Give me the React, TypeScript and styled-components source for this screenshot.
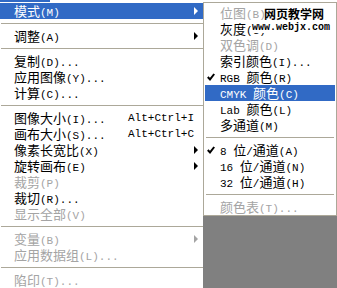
import React from "react";
import styled, { createGlobalStyle } from "styled-components";

const GlobalStyle = createGlobalStyle`
    html, body {
        margin: 0;
        padding: 0;
        background: #808080;
        width: 337px;
        height: 288px;
        overflow: hidden;
    }
    #root {
        width: 337px;
        height: 288px;
        overflow: hidden;
    }
`;

const Page = styled.div`
    display: flex;
    flex-direction: column;
    width: 337px;
    height: 288px;
    font-size: 13px;
    line-height: 16px;
    color: #000;
`;
const MenuBarEdge = styled.div`
    display: flex;
    height: 2px;
    background: #ffffff;
`;
const MenuBarActive = styled.div`
    width: 50px;
    background: #316ac5;
`;
const Body = styled.div`
    display: flex;
    flex: 1;
    min-height: 0;
`;
const MainMenu = styled.div`
    width: 206px;
    flex-shrink: 0;
    background: #ffffff;
    border-right: 1px solid #aca899;
    padding-top: 1px;
    display: flex;
    flex-direction: column;
`;
const SideColumn = styled.div`
    flex: 1;
    margin-left: -4px;
    display: flex;
    flex-direction: column;
    align-items: stretch;
    position: relative;
`;
const SubMenu = styled.div`
    background: #ffffff;
    border: 1px solid #aca899;
    padding: 2px 1px 0 1px;
    height: 214px;
    box-sizing: border-box;
    display: flex;
    flex-direction: column;
`;
const MainItem = styled.div<{ $active?: boolean; $disabled?: boolean }>`
    display: grid;
    grid-template-columns: 114px 1fr 12px;
    align-items: center;
    height: 16px;
    padding: 0 6px 0 14px;
    white-space: nowrap;
    background: ${(p) => (p.$active ? "#316ac5" : "transparent")};
    color: ${(p) => (p.$active ? "#ffffff" : p.$disabled ? "#a4a4a4" : "#000000")};
`;
const SubItem = styled.div<{ $active?: boolean; $disabled?: boolean }>`
    display: grid;
    grid-template-columns: 13px 1fr;
    align-items: center;
    height: 16px;
    padding-left: 2px;
    white-space: nowrap;
    background: ${(p) => (p.$active ? "#316ac5" : "transparent")};
    color: ${(p) => (p.$active ? "#ffffff" : p.$disabled ? "#a4a4a4" : "#000000")};
`;
const Separator = styled.div<{ $h: number }>`
    height: ${(p) => p.$h}px;
    display: flex;
    align-items: center;
    padding: 0 1px;
    &::after {
        content: "";
        flex: 1;
        height: 1px;
        background: #aca899;
    }
`;
const LabelRow = styled.span`
    display: flex;
    align-items: baseline;
    height: 16px;
`;
const Cjk = styled.span`
    display: inline-block;
    height: 16px;
    font-family: "Noto Sans CJK SC", sans-serif;
    font-size: 13px;
    line-height: 16px;
`;
const Lat = styled.span`
    display: inline-block;
    height: 16px;
    white-space: pre;
    font-family: "Liberation Mono", monospace;
    font-size: 11px;
    line-height: 16px;
`;
const Shortcut = styled.span`
    font-family: "Liberation Mono", monospace;
    font-size: 11px;
    line-height: 16px;
`;
const ArrowCell = styled.span`
    display: flex;
    justify-content: flex-start;
    padding-left: 6px;
`;
const Arrow = styled.span`
    width: 0;
    height: 0;
    border-top: 4px solid transparent;
    border-bottom: 4px solid transparent;
    border-left: 4px solid currentColor;
`;
const CanvasArea = styled.div`
    flex: 1;
    background: #808080;
`;
const Watermark = styled.div`
    position: absolute;
    left: 49px;
    top: 4px;
    display: flex;
    flex-direction: column;
    align-items: flex-start;
`;
const WatermarkTitle = styled.div`
    margin-left: 12px;
    font-family: "Noto Sans CJK SC", sans-serif;
    font-size: 12px;
    font-weight: 700;
    line-height: 16px;
    color: #000;
`;
const WatermarkUrl = styled.div`
    background: #ffffff;
    font-family: "Liberation Mono", monospace;
    font-size: 10px;
    font-weight: 700;
    line-height: 11px;
    padding-right: 2px;
    color: #000;
`;

function Label({ text }: { text: string }) {
    const parts = text.match(/[\u3000-\u9fff\uff00-\uffef]+|[^\u3000-\u9fff\uff00-\uffef]+/g) || [];
    return (
        <LabelRow>
            {parts.map((part, i) =>
                /[\u3000-\u9fff\uff00-\uffef]/.test(part) ? (
                    <Cjk key={i}>{part}</Cjk>
                ) : (
                    <Lat key={i}>{part}</Lat>
                )
            )}
        </LabelRow>
    );
}

function Check() {
    return (
        <svg width="8" height="8" viewBox="0 0 8 8">
            <path d="M0.8 4 L3 6.4 L7.2 1" fill="none" stroke="currentColor" strokeWidth="2" />
        </svg>
    );
}

type MainEntry =
    | { sep: true }
    | { sep?: false; text: string; shortcut?: string; sub?: boolean; active?: boolean; disabled?: boolean };

const mainItems: MainEntry[] = [
    { text: "模式(M)", sub: true, active: true },
    { sep: true },
    { text: "调整(A)", sub: true },
    { sep: true },
    { text: "复制(D)..." },
    { text: "应用图像(Y)..." },
    { text: "计算(C)..." },
    { sep: true },
    { text: "图像大小(I)...", shortcut: "Alt+Ctrl+I" },
    { text: "画布大小(S)...", shortcut: "Alt+Ctrl+C" },
    { text: "像素长宽比(X)", sub: true },
    { text: "旋转画布(E)", sub: true },
    { text: "裁剪(P)", disabled: true },
    { text: "裁切(R)..." },
    { text: "显示全部(V)", disabled: true },
    { sep: true },
    { text: "变量(B)", sub: true, disabled: true },
    { text: "应用数据组(L)...", disabled: true },
    { sep: true },
    { text: "陷印(T)...", disabled: true },
];

type SubEntry =
    | { sep: true }
    | { sep?: false; text: string; checked?: boolean; active?: boolean; disabled?: boolean };

const subItems: SubEntry[] = [
    { text: "位图(B)", disabled: true },
    { text: "灰度(G)" },
    { text: "双色调(D)", disabled: true },
    { text: "索引颜色(I)..." },
    { text: "RGB 颜色(R)", checked: true },
    { text: "CMYK 颜色(C)", active: true },
    { text: "Lab 颜色(L)" },
    { text: "多通道(M)" },
    { sep: true },
    { text: "8 位/通道(A)", checked: true },
    { text: "16 位/通道(N)" },
    { text: "32 位/通道(H)" },
    { sep: true },
    { text: "颜色表(T)...", disabled: true },
];

export default function App() {
    return (
        <>
            <GlobalStyle />
            <Page>
                <MenuBarEdge>
                    <MenuBarActive />
                </MenuBarEdge>
                <Body>
                    <MainMenu>
                        {mainItems.map((item, i) =>
                            item.sep ? (
                                <Separator key={i} $h={9} />
                            ) : (
                                <MainItem key={i} $active={item.active} $disabled={item.disabled}>
                                    <Label text={item.text} />
                                    <Shortcut>{item.shortcut}</Shortcut>
                                    <ArrowCell>{item.sub && <Arrow />}</ArrowCell>
                                </MainItem>
                            )
                        )}
                    </MainMenu>
                    <SideColumn>
                        <SubMenu>
                            {subItems.map((item, i) =>
                                item.sep ? (
                                    <Separator key={i} $h={9} />
                                ) : (
                                    <SubItem key={i} $active={item.active} $disabled={item.disabled}>
                                        <span>{item.checked && <Check />}</span>
                                        <Label text={item.text} />
                                    </SubItem>
                                )
                            )}
                        </SubMenu>
                        <CanvasArea />
                        <Watermark>
                            <WatermarkTitle>网页教学网</WatermarkTitle>
                            <WatermarkUrl>www.webjx.com</WatermarkUrl>
                        </Watermark>
                    </SideColumn>
                </Body>
            </Page>
        </>
    );
}
